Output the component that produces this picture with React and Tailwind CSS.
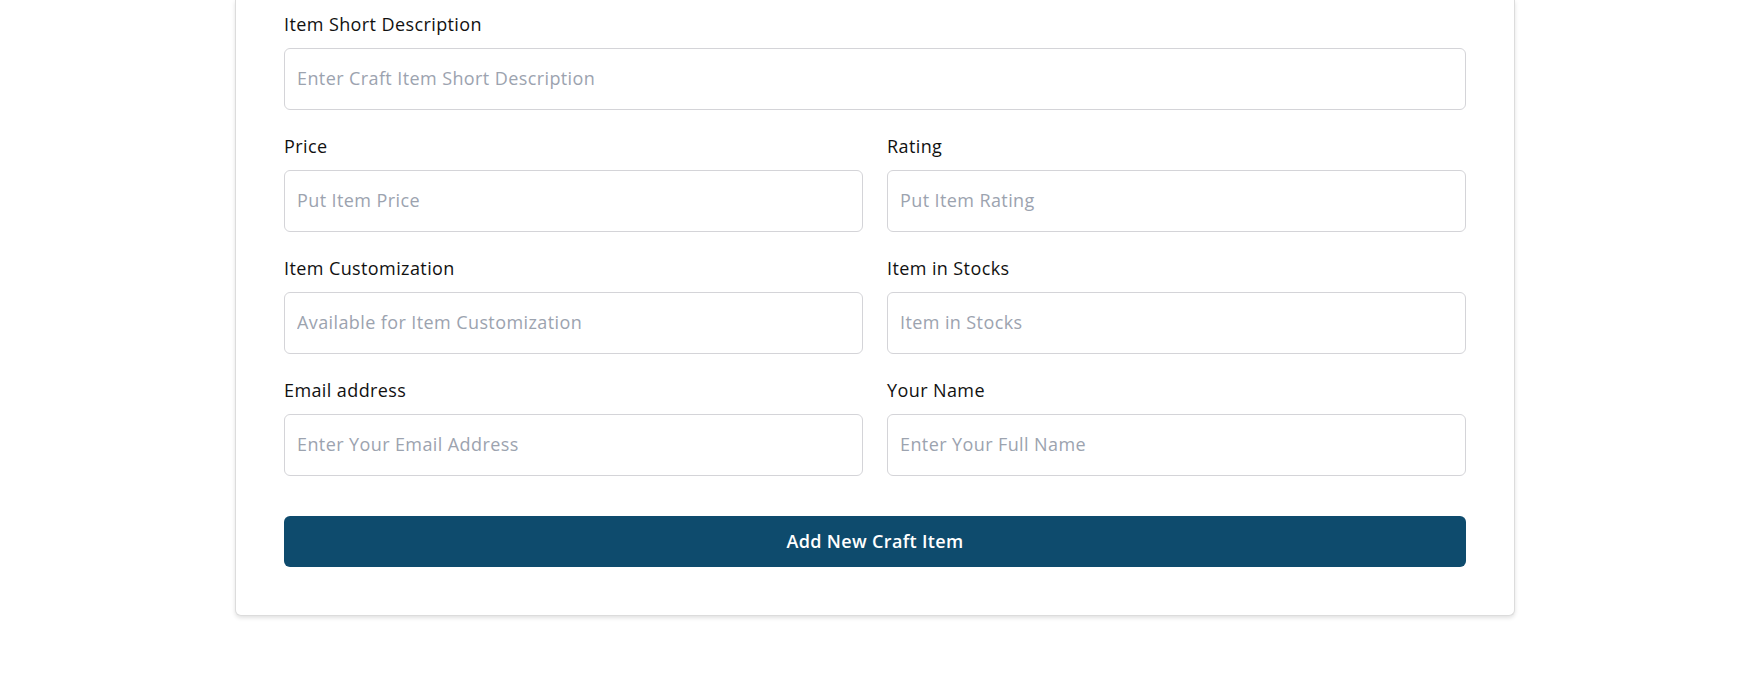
import React from "react";

const Field = ({ label, placeholder, full }) => (
  <div className={full ? "col-span-2 flex flex-col" : "flex flex-col"}>
    <label className="text-[18px] leading-[24px] tracking-[0.4px] text-[#111111] mb-[12px]">{label}</label>
    <input
      type="text"
      placeholder={placeholder}
      className="h-[62px] w-full rounded-md border border-[#d4d4d8] bg-white pl-3 pr-3 pb-[2px] text-[18px] tracking-[0.4px] text-[#111] placeholder:text-[#9ca3af] outline-none"
    />
  </div>
);

export default function App() {
  return (
    <div
      className="min-h-screen bg-white flex justify-center pl-[5px]"
      style={{ fontFamily: '"Open Sans", "Noto Sans", sans-serif' }}
    >
      <div className="w-[1280px] h-fit border-x border-b border-[#dcdcdc] rounded-b-md shadow-[0_2px_4px_rgba(0,0,0,0.12)] bg-white px-12 pt-[12px] pb-12">
        <div className="grid grid-cols-2 gap-x-6 gap-y-6">
          <Field full label="Item Short Description" placeholder="Enter Craft Item Short Description" />
          <Field label="Price" placeholder="Put Item Price" />
          <Field label="Rating" placeholder="Put Item Rating" />
          <Field label="Item Customization" placeholder="Available for Item Customization" />
          <Field label="Item in Stocks" placeholder="Item in Stocks" />
          <Field label="Email address" placeholder="Enter Your Email Address" />
          <Field label="Your Name" placeholder="Enter Your Full Name" />
        </div>
        <button className="mt-10 h-[51px] w-full rounded-md bg-[#0e4b6d] text-white text-[18px] tracking-[0.35px] font-semibold">
          Add New Craft Item
        </button>
      </div>
    </div>
  );
}
